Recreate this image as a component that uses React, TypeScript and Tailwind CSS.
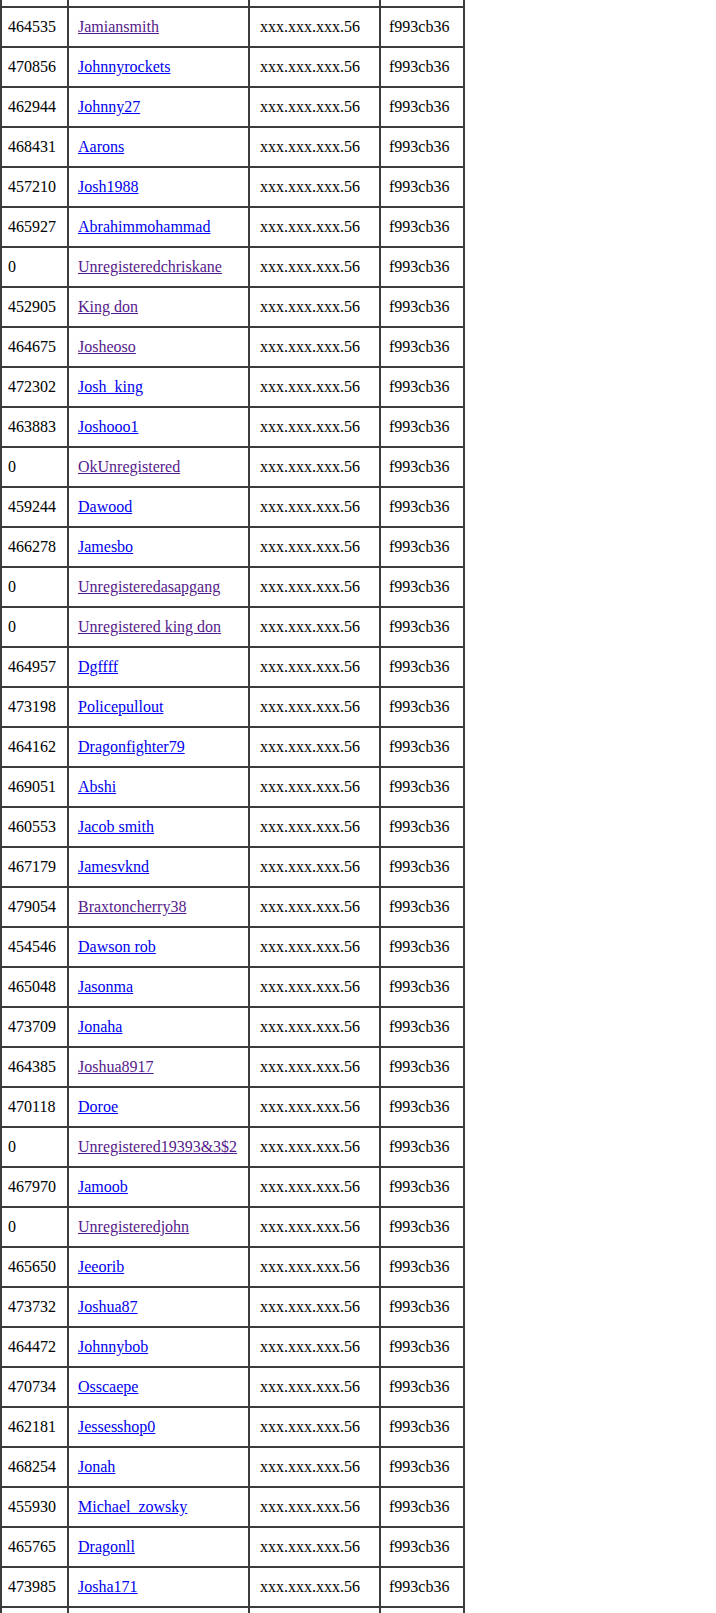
const rows: [string, string, boolean][] = [
  ["464535", "Jamiansmith", true],
  ["470856", "Johnnyrockets", false],
  ["462944", "Johnny27", false],
  ["468431", "Aarons", false],
  ["457210", "Josh1988", false],
  ["465927", "Abrahimmohammad", false],
  ["0", "Unregisteredchriskane", true],
  ["452905", "King don", true],
  ["464675", "Josheoso", true],
  ["472302", "Josh_king", false],
  ["463883", "Joshooo1", false],
  ["0", "OkUnregistered", true],
  ["459244", "Dawood", false],
  ["466278", "Jamesbo", false],
  ["0", "Unregisteredasapgang", true],
  ["0", "Unregistered king don", true],
  ["464957", "Dgffff", false],
  ["473198", "Policepullout", false],
  ["464162", "Dragonfighter79", false],
  ["469051", "Abshi", false],
  ["460553", "Jacob smith", false],
  ["467179", "Jamesvknd", false],
  ["479054", "Braxtoncherry38", true],
  ["454546", "Dawson rob", false],
  ["465048", "Jasonma", false],
  ["473709", "Jonaha", false],
  ["464385", "Joshua8917", true],
  ["470118", "Doroe", false],
  ["0", "Unregistered19393&3$2", true],
  ["467970", "Jamoob", false],
  ["0", "Unregisteredjohn", true],
  ["465650", "Jeeorib", false],
  ["473732", "Joshua87", false],
  ["464472", "Johnnybob", false],
  ["470734", "Osscaepe", false],
  ["462181", "Jessesshop0", false],
  ["468254", "Jonah", false],
  ["455930", "Michael_zowsky", false],
  ["465765", "Dragonll", false],
  ["473985", "Josha171", false],
]

const rowCls = "grid grid-cols-[67px_181px_131px_84px] border-l-2 border-[#3c3c3c]"
const cell = "border-r-2 border-b-2 border-[#3c3c3c] flex items-center whitespace-nowrap"

const App = () => {
  return (
    <div className="w-[716px] h-[1613px] overflow-hidden bg-white text-black text-[16px] font-['Liberation_Serif',_serif]">
      <div className="w-[465px]">
        <div className={`${rowCls} h-[8px]`}>
          <div className={cell}></div>
          <div className={cell}></div>
          <div className={cell}></div>
          <div className={cell}></div>
        </div>
        {rows.map(([id, name, visited], i) => (
          <div key={i} className={`${rowCls} h-[40px]`}>
            <div className={`${cell} pl-[6px]`}>{id}</div>
            <div className={`${cell} pl-[9px]`}>
              <a href="#" className={`underline ${visited ? "text-[#551a8b]" : "text-[#0000ee]"}`}>{name}</a>
            </div>
            <div className={`${cell} pl-[10px]`}>xxx.xxx.xxx.56</div>
            <div className={`${cell} pl-[8px]`}>f993cb36</div>
          </div>
        ))}
        <div className={`${rowCls} h-[40px]`}>
          <div className={cell}></div>
          <div className={cell}></div>
          <div className={cell}></div>
          <div className={cell}></div>
        </div>
      </div>
    </div>
  )
}

export default App
